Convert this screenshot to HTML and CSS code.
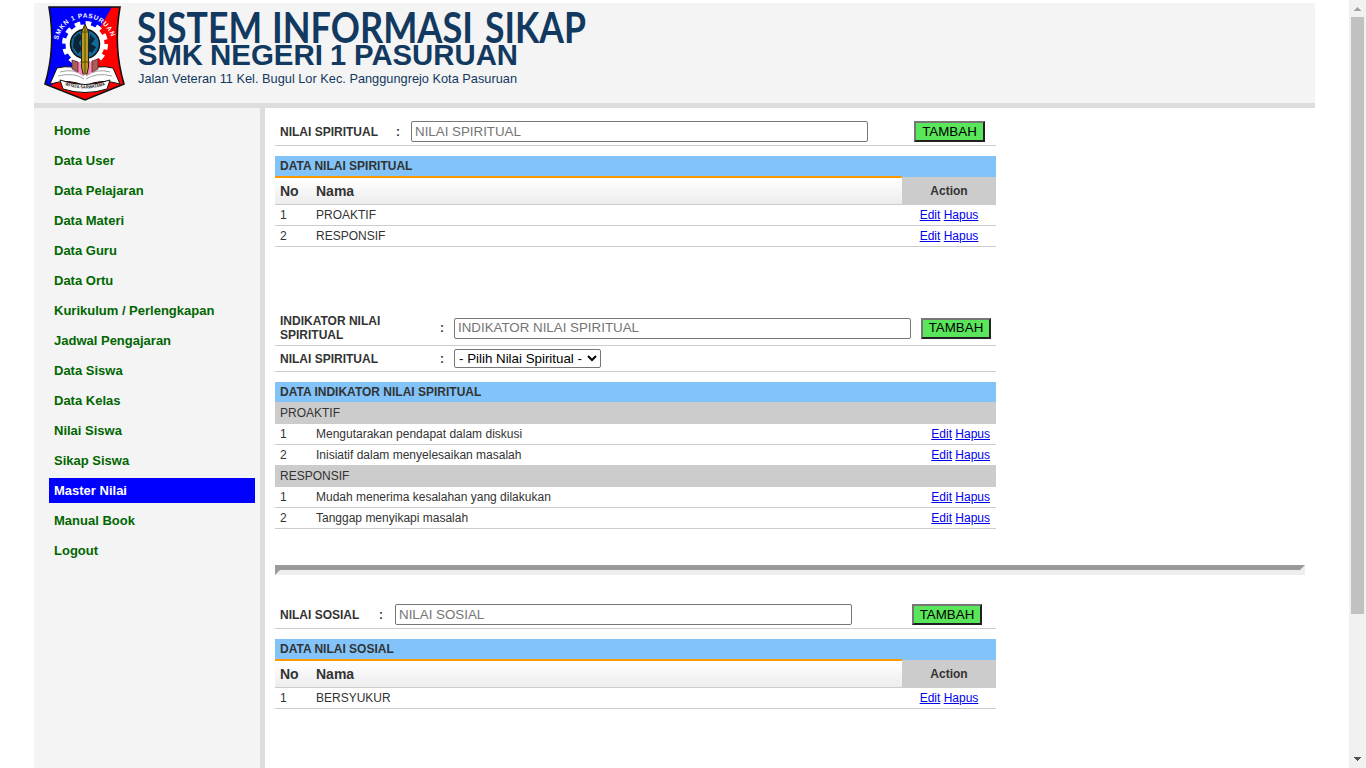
FILE: index.html
```html
<!DOCTYPE html>
<html lang="id">
<head>
<meta charset="utf-8">
<title>Sistem Informasi Sikap</title>
<link rel="stylesheet" href="styles.css">
</head>
<body>
<div class="viewport">
<div class="page">
  <header class="header">
    <svg class="logo" width="84" height="98" viewBox="0 0 84 98">
      <defs>
        <clipPath id="shield"><path d="M6 2H77Q70 42 81 79L42 95L2 79Q13 42 6 2Z"/></clipPath>
        <path id="arc" d="M15 35A27.500 27.500 0 0 1 69 35"/>
        <path id="ribbon" d="M21 80Q42 87 63 80"/>
      </defs>
      <g clip-path="url(#shield)">
        <path fill="#f00" d="M0 0H84V98H0Z"/>
        <path fill="#00f" d="M0 0H70L48 38L30 66L0 86Z"/>
      </g>
      <path d="M6 2H77Q70 42 81 79L42 95L2 79Q13 42 6 2Z" fill="none" stroke="#111" stroke-width="1.600"/>
      <circle cx="42" cy="39" r="20.500" fill="none" stroke="#fff" stroke-width="5" stroke-dasharray="5.500 5.233"/>
      <circle cx="42" cy="39" r="17" fill="none" stroke="#fff" stroke-width="5"/>
      <circle cx="42" cy="39" r="14.500" fill="#116a9c" stroke="#111" stroke-width="1.500"/>
      <path d="M31 33l5-5 3 4-3 6 3 6-4 5-5-7zM47 29l5 5-4 5 5 3-4 6-4-2z" fill="#082637"/>
      <path d="M14 63Q30 59 42 67Q54 59 70 63L77 79Q58 73 42 81Q26 73 7 79Z" fill="#fff" stroke="#111"/>
      <path d="M17 67Q31 63 41 71M15 71Q31 67 41 74M67 67Q54 63 43 71M69 71Q54 67 43 74" fill="none" stroke="#888" stroke-width=".8"/>
      <path d="M35 57l5 3v11l-5-3zM44 60l5-4v11l-5 4z" fill="#f8b"/>
      <path d="M29 55l6 2v10l-6-3zM49 56l6-2v10l-6 3z" fill="#a36258" stroke="#502" stroke-width=".6"/>
      <path d="M42 19L45.500 27V62L44 69H40L38.500 62V27Z" fill="#b99a20" stroke="#222"/>
      <path d="M42 21V68M39 27H45M37 57H47" stroke="#574706"/>
      <path d="M17 75Q42 84 67 75L64 84Q42 91 20 84Z" fill="#fff" stroke="#111"/>
      <text class="logo-name"><textPath href="#arc" textLength="72" lengthAdjust="spacing">SMKN 1 PASURUAN</textPath></text>
      <text class="logo-motto"><textPath href="#ribbon" startOffset="1" textLength="41" lengthAdjust="spacingAndGlyphs">WIYATA SARWATAMA</textPath></text>
    </svg>
    <svg class="banner" width="460" height="90" viewBox="0 0 460 90">
      <g class="banner-title">
        <text x="2" y="40" textLength="125" lengthAdjust="spacingAndGlyphs">SISTEM</text>
        <text x="137" y="40" textLength="201" lengthAdjust="spacingAndGlyphs">INFORMASI</text>
        <text x="350" y="40" textLength="101" lengthAdjust="spacingAndGlyphs">SIKAP</text>
      </g>
      <g class="banner-school">
        <text x="3" y="62" textLength="65" lengthAdjust="spacingAndGlyphs">SMK</text>
        <text x="75" y="62" textLength="113" lengthAdjust="spacingAndGlyphs">NEGERI</text>
        <text x="195" y="62">1</text>
        <text x="219" y="62" textLength="164" lengthAdjust="spacingAndGlyphs">PASURUAN</text>
      </g>
      <text class="banner-address" x="3" y="80" textLength="379" lengthAdjust="spacingAndGlyphs">Jalan Veteran 11 Kel. Bugul Lor Kec. Panggungrejo Kota Pasuruan</text>
    </svg>
  </header>
  <div class="body">
    <nav class="menu">
      <a>Home</a><a>Data User</a><a>Data Pelajaran</a><a>Data Materi</a><a>Data Guru</a><a>Data Ortu</a><a>Kurikulum / Perlengkapan</a><a>Jadwal Pengajaran</a><a>Data Siswa</a><a>Data Kelas</a><a>Nilai Siswa</a><a>Sikap Siswa</a><a class="active">Master Nilai</a><a>Manual Book</a><a>Logout</a>
    </nav>
    <main class="content">
      <form class="form spiritual">
        <div class="form-row"><label>NILAI SPIRITUAL</label><b>:</b><input type="text" placeholder="NILAI SPIRITUAL"><button type="button">TAMBAH</button></div>
      </form>
      <section class="table">
        <div class="caption">DATA NILAI SPIRITUAL</div>
        <div class="head"><div class="head-main"><span class="no">No</span><span>Nama</span></div><div class="head-action">Action</div></div>
        <div class="row"><span class="no">1</span><span class="name">PROAKTIF</span><span class="actions"><a href="#">Edit</a> <a href="#">Hapus</a></span></div>
        <div class="row"><span class="no">2</span><span class="name">RESPONSIF</span><span class="actions"><a href="#">Edit</a> <a href="#">Hapus</a></span></div>
      </section>

      <form class="form indicator">
        <div class="form-row tall"><label>INDIKATOR NILAI<br>SPIRITUAL</label><b>:</b><input type="text" placeholder="INDIKATOR NILAI SPIRITUAL"><button type="button">TAMBAH</button></div>
        <div class="form-row short"><label>NILAI SPIRITUAL</label><b>:</b><select><option>- Pilih Nilai Spiritual -</option></select></div>
      </form>
      <section class="table grouped">
        <div class="caption">DATA INDIKATOR NILAI SPIRITUAL</div>
        <div class="row group">PROAKTIF</div>
        <div class="row"><span class="no">1</span><span class="name">Mengutarakan pendapat dalam diskusi</span><span class="actions"><a href="#">Edit</a> <a href="#">Hapus</a></span></div>
        <div class="row"><span class="no">2</span><span class="name">Inisiatif dalam menyelesaikan masalah</span><span class="actions"><a href="#">Edit</a> <a href="#">Hapus</a></span></div>
        <div class="row group">RESPONSIF</div>
        <div class="row"><span class="no">1</span><span class="name">Mudah menerima kesalahan yang dilakukan</span><span class="actions"><a href="#">Edit</a> <a href="#">Hapus</a></span></div>
        <div class="row"><span class="no">2</span><span class="name">Tanggap menyikapi masalah</span><span class="actions"><a href="#">Edit</a> <a href="#">Hapus</a></span></div>
      </section>

      <hr>

      <form class="form social">
        <div class="form-row"><label>NILAI SOSIAL</label><b>:</b><input type="text" placeholder="NILAI SOSIAL"><button type="button">TAMBAH</button></div>
      </form>
      <section class="table">
        <div class="caption">DATA NILAI SOSIAL</div>
        <div class="head"><div class="head-main"><span class="no">No</span><span>Nama</span></div><div class="head-action">Action</div></div>
        <div class="row"><span class="no">1</span><span class="name">BERSYUKUR</span><span class="actions"><a href="#">Edit</a> <a href="#">Hapus</a></span></div>
      </section>
    </main>
  </div>
</div>
<div class="scrollbar">
  <svg width="17" height="17" shape-rendering="crispEdges"><path d="M8 7h1v1h1v1h1v1h1v1H5v-1h1V9h1V8h1z" fill="#a3a3a3"/></svg>
  <div class="track"><div class="thumb"></div></div>
  <svg width="17" height="17" shape-rendering="crispEdges"><path d="M5 6h7v1h-1v1h-1v1H9v1H8V9H7V8H6V7H5z" fill="#505050"/></svg>
</div>
</div>
</body>
</html>
```
FILE: styles.css
```css
* { box-sizing: border-box; }
body { margin: 0; background: #fff; color: #333; font: 12px/14px "Liberation Sans", Arial, sans-serif; }
.viewport { display: flex; justify-content: space-between; height: 768px; overflow: hidden; }
.page { display: flex; flex-direction: column; width: 1281px; margin-left: 34px; padding-top: 3px; }
.header { display: flex; flex: none; height: 105px; background: #f4f4f4; border-bottom: 5px solid #ddd; }
.logo { margin: 2px 0 0 9px; flex: none; }
.banner { margin-left: 8px; flex: none; fill: #12395f; overflow: visible; }
.logo-name { font: bold 6.5px "Liberation Sans", Arial, sans-serif; fill: #fff; }
.logo-motto { font: bold 4.5px "Liberation Sans", Arial, sans-serif; fill: #111; }
.banner-title { font: bold 41.5px Lato, sans-serif; }
.banner-school { font: bold 29px "Liberation Sans", Arial, sans-serif; }
.banner-address { font: 13px "Liberation Sans", Arial, sans-serif; }
.body { display: flex; flex: 1; min-height: 0; }
.menu { flex: none; display: flex; flex-direction: column; gap: 5px; width: 231px; padding: 10px 5px 0 15px; background: #f4f4f4; border-right: 5px solid #ddd; }
.menu a { flex: none; height: 25px; padding: 0 5px; font: bold 13px/25px "Liberation Sans", Arial, sans-serif; color: #060; }
.menu a.active { background: #00f; color: #fff; }
.content { flex: 1; padding: 10px 10px 0; }
.form { width: 721px; margin-bottom: 10px; }
.form-row { display: flex; align-items: center; height: 28px; padding-left: 5px; border-bottom: 1px solid #ccc; font-weight: bold; }
.form-row label { width: 116px; }
.form-row b { width: 15px; }
.form-row input { width: 457px; height: 21px; margin: 0; padding: 0 2px 1px 3px; border: 1px solid #767676; border-radius: 2px; font: 13.333px "Liberation Sans", Arial, sans-serif; }
.form-row input::placeholder { color: #757575; }
.form-row button { width: 71px; height: 21px; margin: 0 0 0 46px; padding: 0; background: #5ae65a; border: 2px solid; border-color: #767676 #212121 #212121 #767676; color: #000; font: 13.333px/16px "Liberation Sans", Arial, sans-serif; }
.indicator { margin-top: 64px; }
.indicator .form-row label { width: 160px; }
.indicator .form-row b { width: 14px; }
.indicator .form-row button { width: 70px; margin-left: 10px; }
.form-row.tall { height: 35px; }
.form-row.short { height: 26px; }
.form-row select { width: 147px; height: 19px; margin: 0; padding: 0; border: 1px solid #767676; border-radius: 2px; background: #fff; color: #000; font: 13.333px "Liberation Sans", Arial, sans-serif; }
.social { margin-top: 26px; }
.social .form-row label { width: 99px; }
.social .form-row b { width: 16px; }
.social .form-row button { width: 70px; margin-left: 60px; }
.table { width: 721px; }
.caption { height: 21px; padding-left: 5px; background: #82c4f9; font-weight: bold; line-height: 20px; }
.grouped .caption { border-bottom: 1px solid #ccc; }
.head { display: flex; height: 28px; font-weight: bold; }
.head-main { flex: 1; display: flex; margin-top: -1px; padding-left: 5px; border-top: 2px solid #f90; border-bottom: 1px solid #ccc; background: linear-gradient(#fff, #ededed); font-size: 14px; line-height: 26px; }
.head-action { width: 94px; background: #ccc; text-align: center; line-height: 28px; }
.no { width: 36px; }
.row { display: flex; height: 21px; padding-left: 5px; border-bottom: 1px solid #ccc; line-height: 20px; }
.row .name { flex: 1; }
.actions { width: 94px; text-align: center; white-space: pre; }
.actions a { color: #00e; }
.grouped .actions { width: auto; padding-right: 6px; }
.group { background: #ccc; }
hr { height: 10px; margin: 36px 0 0; border: 5px solid; border-color: #9a9a9a #eee #eee #9a9a9a; }
.scrollbar { display: flex; flex-direction: column; width: 17px; background: #f1f1f1; }
.scrollbar svg { flex: none; }
.track { flex: 1; padding: 0 2px; }
.thumb { height: 597px; background: #c1c1c1; }
```
